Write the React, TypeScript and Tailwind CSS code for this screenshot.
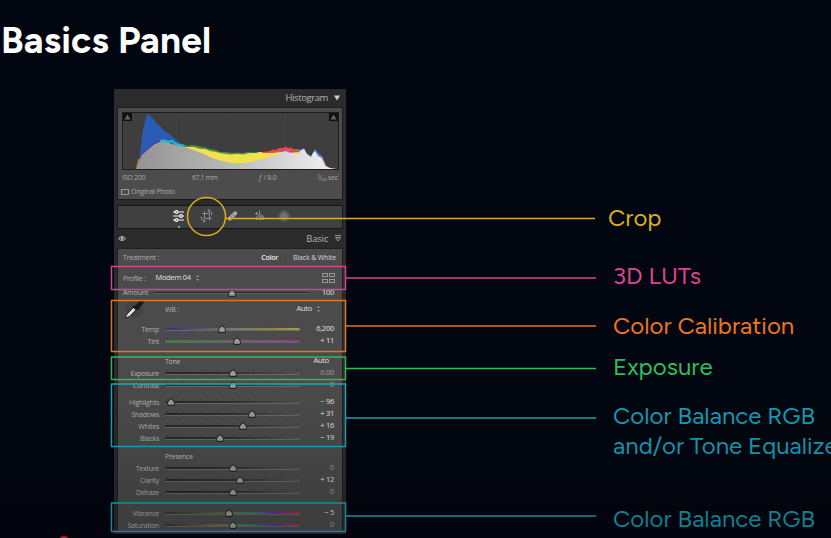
import type { ReactNode } from 'react';

type SliderProps = { label: string; thumb: number; value: string; bright?: boolean; track?: string; top?: string };

const plain = 'linear-gradient(90deg,#282828,#303030 50%,#505050)';

function Thumb({ x }: { x: number }) {
  return (
    <svg className="absolute top-[2px] h-[8px] w-[9px] -translate-x-1/2" style={{ left: x }} viewBox="0 0 9 8">
      <path d="M4.500 .7 7.500 3.200 8 5.300 7.500 7.300H1.500L1 5.300 1.500 3.200Z" fill="#9b9b9b" stroke="#171717" strokeWidth="1" strokeLinejoin="round" />
    </svg>
  );
}

function Slider({ label, thumb, value, bright = false, track = plain, top = '' }: SliderProps) {
  return (
    <div className={`flex h-3 items-center ${top}`}>
      <span className="w-[42px] whitespace-nowrap pr-px text-right text-[#b0b0b0]">{label}</span>
      <div className="relative ml-[5px] h-3 w-[135px]">
        <div className="mt-[5px] h-[3px] w-full rounded-sm border-b border-[#686868]" style={{ background: track }} />
        <div className="absolute top-[3px] flex w-full justify-between px-[2px]">
          {Array.from({ length: 9 }, (_, i) => <i key={i} className="h-px w-px bg-[#343434]" />)}
        </div>
        <Thumb x={thumb - 165} />
      </div>
      <span className={`ml-auto mr-[8px] text-[7.500px] ${bright ? 'font-medium text-[#e4e4e4]' : 'text-[#a0a0a0]'}`}>{value}</span>
    </div>
  );
}

function Histogram() {
  return (
    <svg className="block h-[58px] w-[217px]" viewBox="122 112 217 58">
      <rect x="122" y="112" width="217" height="58" fill="#3e3e3e" />
      <path d="M176.500 112v57M230.500 112v57M284.500 112v57" stroke="#434343" />
      <path d="M137 169 140 154 143 130 146 117 147 114.500 148 115.500 149 114 150 115.500 152 118 155 120.500 156 123 160 126 163 129.500 168 133 174 138 180 143 186 146V169Z" fill="#2a5cb3" />
      <path d="M180 146 184 144.500 188 146 192 145 198 146 203 147 207 148 212 149.500 216 150 220 152 226 152 232 153 238 152.500 242 153 248 152 254 152.500 262 152V162L180 154Z" fill="#4a9440" />
      <path d="M182 147 188 147 194 147 200 149 205 149 210 151 216 152 222 153.500 230 154.500 238 154 243 154.500 250 153 256 153 260 152 266 152 274 151 280 149 288 149 304 151V169H190Z" fill="#f0e14d" />
      <path d="M261 153 264 151.500 268 152 273 149.500 276 150 279 148 283 148 286 146.500 288 148 291 147.500 293 149 298 149 302 152 294 153 288 151 281 152 272 153Z" fill="#e44c4a" />
      <path d="M296 153 299 149 301 150 304 148 307 154 311 156 315 149 318 153 322 156 325 163Z" fill="#4b80d9" />
      <linearGradient id="light" x1="0" x2="1"><stop stopColor="#939393" /><stop offset=".45" stopColor="#b8b8b8" /><stop offset=".8" stopColor="#dedede" /><stop offset="1" stopColor="#f4f4f4" /></linearGradient>
      <path d="M137 169 141 155 148 149 154 144 160 142 166 142 172 144 180 146 188 148 196 151 204 154 212 158 222 161 232 163 244 163 256 161 266 158 275 155 282 152 288 150 292 153 298 153 301 150 304 149 307 154 311 157 313 153 315 151 318 156 322 158 326 166 330 168 337 169Z" fill="url(#light)" />
      <path d="M138 162 141 155 148 149 154 144 160 141" fill="none" stroke="#662992" strokeWidth="1" />
      <path d="M160 141 164 140.500 168 142 172 141 176 144 184 146" fill="none" stroke="#2bbec4" strokeWidth="2" />
      <path d="M136.500 169 139 159" stroke="#e59a31" strokeWidth="1" />
      <path d="M283 151 286 150 288 151.500 292 152" fill="none" stroke="#dc35bb" strokeWidth="1.500" />
      <path d="M294 153h6" stroke="#f0df4b" strokeWidth="1.500" />
      <path d="m321 157 3 6 2 4" fill="none" stroke="#e8a14b" strokeWidth=".8" />
      <rect x="122.500" y="112.500" width="216" height="57" fill="none" stroke="#1c1c1c" />
      {[123, 329].map((x) => (
        <g key={x}><rect x={x} y="113" width="9" height="8" fill="#111" /><path d={`M${x + 1.5} 119.500l3-5 3 5Z`} fill="#656565" /></g>
      ))}
    </svg>
  );
}

function Tools() {
  return (
    <svg className="block h-[22px] w-[224px]" viewBox="118 206 224 22" fill="none" stroke="#999">
      <g stroke="#f2f2f2" strokeWidth="1.200">
        <path d="M173 212h11M173 216h11M173 220h11" />
        <circle cx="176.500" cy="212" r="1.400" fill="#444" /><circle cx="181" cy="216" r="1.400" fill="#444" /><circle cx="176.500" cy="220" r="1.400" fill="#444" />
      </g>
      <circle cx="179" cy="227" r="1" fill="#bbb" stroke="none" />
      <path d="M204.500 211.500v7h7M202.500 213.500h7v7M201 216.500q0 4 4 4.500M203.300 219.500l2 1.600-2 1.300M212 215q0-4-4-4.500M209.700 212l-2-1.600 2-1.300" strokeWidth=".9" />
      <path d="m229.800 218.700 5.400-5.400" stroke="#aaa" strokeWidth="4" strokeLinecap="round" />
      <path d="m230.500 216 2.500 2.500M232.500 214l2.500 2.500" stroke="#555" strokeWidth=".8" />
      <path d="M255 213.500h3M256.500 212v3M256.500 220q-1-3 2-5 4-1 5.500 2.500 0 1.500-1 2.500M259.500 210.500v4" strokeWidth=".9" />
      <circle cx="260.500" cy="218" r="1.800" strokeWidth=".9" />
      <circle cx="284" cy="216" r="3.500" fill="#6c6c6c" stroke="#6c6c6c" />
      <circle cx="284" cy="216" r="5" stroke="#929292" strokeDasharray="1 1.100" />
      <circle cx="284" cy="216" r="2.700" stroke="#858585" strokeDasharray=".8 1" />
    </svg>
  );
}

function Stepper() {
  return (
    <svg className="ml-[5px] h-[6px] w-[3px]" viewBox="0 0 3 6" fill="#999"><path d="M0 2 1.500 0 3 2ZM0 4h3L1.500 6Z" /></svg>
  );
}

function AdjustPanel() {
  return (
    <section className="flex w-[232px] shrink-0 flex-col bg-[#2b2b2b] px-[3px] font-['Open_Sans','Noto_Sans',sans-serif] text-[7px] leading-none tracking-[-0.25px]">
      <div className="flex h-[18px] items-center justify-end pr-[3px] text-[9.500px] tracking-[-0.400px] text-[#b4b4b4]">
        Histogram
        <svg className="ml-[6px] h-[6px] w-[6px]" viewBox="0 0 7 6"><path d="M0 0h7L3.500 6Z" fill="#d0d0d0" /></svg>
      </div>
      <div className="h-[93px] border border-[#1b1b1b] bg-[#4c4c4c] px-1 pt-1 text-[#a8a8a8]">
        <Histogram />
        <div className="flex h-[15px] items-center justify-between"><span>ISO 200</span><span className="ml-[6px] tracking-[-0.450px]">67.1 mm</span><span className="-mr-[18px]"><i>ƒ</i> / 8.0</span><span className="ml-[18px]"><sup className="text-[5px]">1</sup>⁄<sub className="text-[4px]">500</sub> sec</span></div>
        <div className="flex h-[13px] items-center gap-[2px] tracking-[-0.220px]"><i className="-ml-px h-[6px] w-[8px] border border-[#999]" />Original Photo</div>
      </div>
      <div className="mt-[5px] h-[24px] border border-[#171717] bg-[#404040]"><Tools /></div>
      <div className="flex h-[19px] items-center pr-[2px] text-[9.500px] tracking-[-0.250px] text-[#b4b4b4]">
        <svg className="ml-[1px] h-[7px] w-[8px]" viewBox="0 0 9 7" fill="none" stroke="#ccc"><path d="M.5 3.500Q4.500-1 8.500 3.500Q4.500 8 .5 3.500Z" /><circle cx="4.500" cy="3.500" r="1" fill="#ccc" /></svg>
        <span className="ml-auto">Basic</span>
        <svg className="ml-[7px] h-[7px] w-[6px]" viewBox="0 0 6 7" fill="none" stroke="#999"><path d="M0 .6h6M.5 2.500h5L3 6Z" /></svg>
      </div>
      <div className="h-[284px] border border-[#202020] bg-[#4b4b4b]">
        <div className="flex h-[17px] items-center pl-[5px] pr-[6px] text-[#b0b0b0]"><span className="tracking-[-0.150px]">Treatment :</span><b className="ml-auto font-semibold text-[#eee]">Color</b><i className="mx-[7px] h-[7px] w-px bg-[#3c3c3c]" /><span className="tracking-[-0.150px] text-[#d4d4d4]">Black &amp; White</span></div>
        <div className="flex h-[24px] items-center pl-[5px] pr-[7px] text-[#b0b0b0]">
          <span>Profile :</span><span className="ml-[10px] text-[7.500px] font-medium tracking-[-0.350px] text-[#e0e0e0]">Modern 04</span><Stepper />
          <div className="ml-auto grid grid-cols-2 gap-x-px gap-y-[2px]">{[0, 1, 2, 3].map((i) => <i key={i} className="h-[4px] w-[6px] border border-[#999]" />)}</div>
        </div>
        <div className="flex h-[5px] items-center pl-[5px] pr-[8px] text-[#b5b5b5]">
          <span className="w-[24px] tracking-[-0.150px]">Amount</span>
          <div className="relative ml-[7px] h-3 w-[154px]"><div className="mt-[5px] h-[2px] border-b border-[#606060] bg-[#292929]" /><Thumb x={77.5} /></div>
          <span className="ml-auto text-[7.500px] font-medium text-[#e0e0e0]">100</span>
        </div>
        <div className="flex h-[28px] items-center pl-[5px] pr-[22px] text-[#b0b0b0]">
          <svg className="h-[22px] w-[22px]" viewBox="0 0 22 22"><circle cx="11" cy="11" r="9" fill="#434343" /><path d="m2 20 2-4 7-7 2.500 2.500-7 7Z" fill="#ddd" stroke="#222" /><path d="m10 8 4 4M12 9l4-4 3-2 .5 2-2 2-3 4Z" fill="#191919" stroke="#191919" strokeWidth="2" /></svg>
          <span className="ml-[20px]">WB :</span><span className="ml-auto text-[7.500px] font-medium text-[#e0e0e0]">Auto</span><Stepper />
        </div>
        <Slider label="Temp" thumb={222} value="6,200" bright track="linear-gradient(90deg,#303099,#555370,#777,#88834e,#a4a13b)" />
        <Slider label="Tint" thumb={237} value="+ 11" bright track="linear-gradient(90deg,#2c8a35,#4d6f50,#666,#805080,#98358d)" />
        <div className="mt-[8px] flex h-3 items-center pl-[47px] pr-[13px] text-[#b8b8b8]"><span>Tone</span><span className="ml-auto text-[7.500px] font-medium text-[#e0e0e0]">Auto</span></div>
        <Slider label="Exposure" thumb={232.5} value="0.00" />
        <Slider label="Contrast" thumb={232.5} value="0" />
        <Slider label="Highlights" thumb={171} value="− 96" bright top="mt-[5px]" />
        <Slider label="Shadows" thumb={252} value="+ 31" bright />
        <Slider label="Whites" thumb={242.5} value="+ 16" bright />
        <Slider label="Blacks" thumb={220} value="− 19" bright />
        <div className="mt-[6px] flex h-3 items-center pl-[47px] text-[#bcbcbc]">Presence</div>
        <Slider label="Texture" thumb={232.5} value="0" />
        <Slider label="Clarity" thumb={240} value="+ 12" bright />
        <Slider label="Dehaze" thumb={232.5} value="0" />
        <Slider label="Vibrance" thumb={229} value="− 5" bright top="mt-[9px]" track="linear-gradient(90deg,#333,#556d46 45%,#397b73 65%,#553498 80%,#aa3340)" />
        <Slider label="Saturation" thumb={232.5} value="0" track="linear-gradient(90deg,#333,#746b39 40%,#397b67 62%,#553498 80%,#aa3340)" />
      </div>
    </section>
  );
}

function Label({ children, className }: { children: ReactNode; className: string }) {
  return <div className={`whitespace-nowrap text-[24px] leading-[30px] ${className}`}>{children}</div>;
}

export default function App() {
  return (
    <main className="relative flex h-[538px] w-[831px] flex-col overflow-hidden bg-[#020610] font-[Figtree,Lato,sans-serif]">
      <h1 className="h-[89px] pl-[1px] pt-[17px] text-[37px] font-bold leading-[46px] tracking-[0.200px] text-white">Basics Panel</h1>
      <div className="flex pl-[114px]">
        <AdjustPanel />
        <div className="ml-[262px] pt-[114px]">
          <Label className="text-[#dcae20]">Crop</Label>
          <Label className="ml-[5px] mt-[28px] text-[#db458f]">3D LUTs</Label>
          <Label className="ml-[5px] mt-[20px] text-[#ed7623]">Color Calibration</Label>
          <Label className="ml-[5px] mt-[11px] text-[#30bd5b]">Exposure</Label>
          <Label className="ml-[5px] mt-[19px] text-[#169fb9]">Color Balance RGB<br />and/or Tone Equalizer</Label>
          <Label className="ml-[5px] mt-[43px] text-[#1a98ad]">Color Balance RGB</Label>
        </div>
      </div>
      <svg className="pointer-events-none absolute inset-0 h-[538px] w-[831px]" viewBox="0 0 831 538" fill="none" strokeWidth="1.500">
        <g stroke="#d9ae25"><circle cx="206.500" cy="216.500" r="19" /><path d="M225 218.500H595" /></g>
        <path d="M111.500 266.500h234v23h-234ZM346 278H596" stroke="#d14690" />
        <path d="M111.500 300.500h234v51h-234ZM346 326H596" stroke="#e27427" />
        <path d="M111.500 357h234v22.500h-234ZM346 368.500H596" stroke="#30b85b" />
        <path d="M111.500 384h234v62.500h-234ZM346 418H596" stroke="#1fa5bd" />
        <path d="M111.500 503h234v28.500h-234ZM346 516H596" stroke="#1fa5bd" />
      </svg>
      <div className="pointer-events-none absolute inset-x-0 bottom-0 h-[160px] bg-linear-to-b from-transparent to-black/20" />
      <svg className="pointer-events-none absolute bottom-0 left-[58px] h-[2px] w-[12px]" viewBox="0 0 12 2"><circle cx="6" cy="6" r="6" fill="#b51938" /></svg>
    </main>
  );
}
